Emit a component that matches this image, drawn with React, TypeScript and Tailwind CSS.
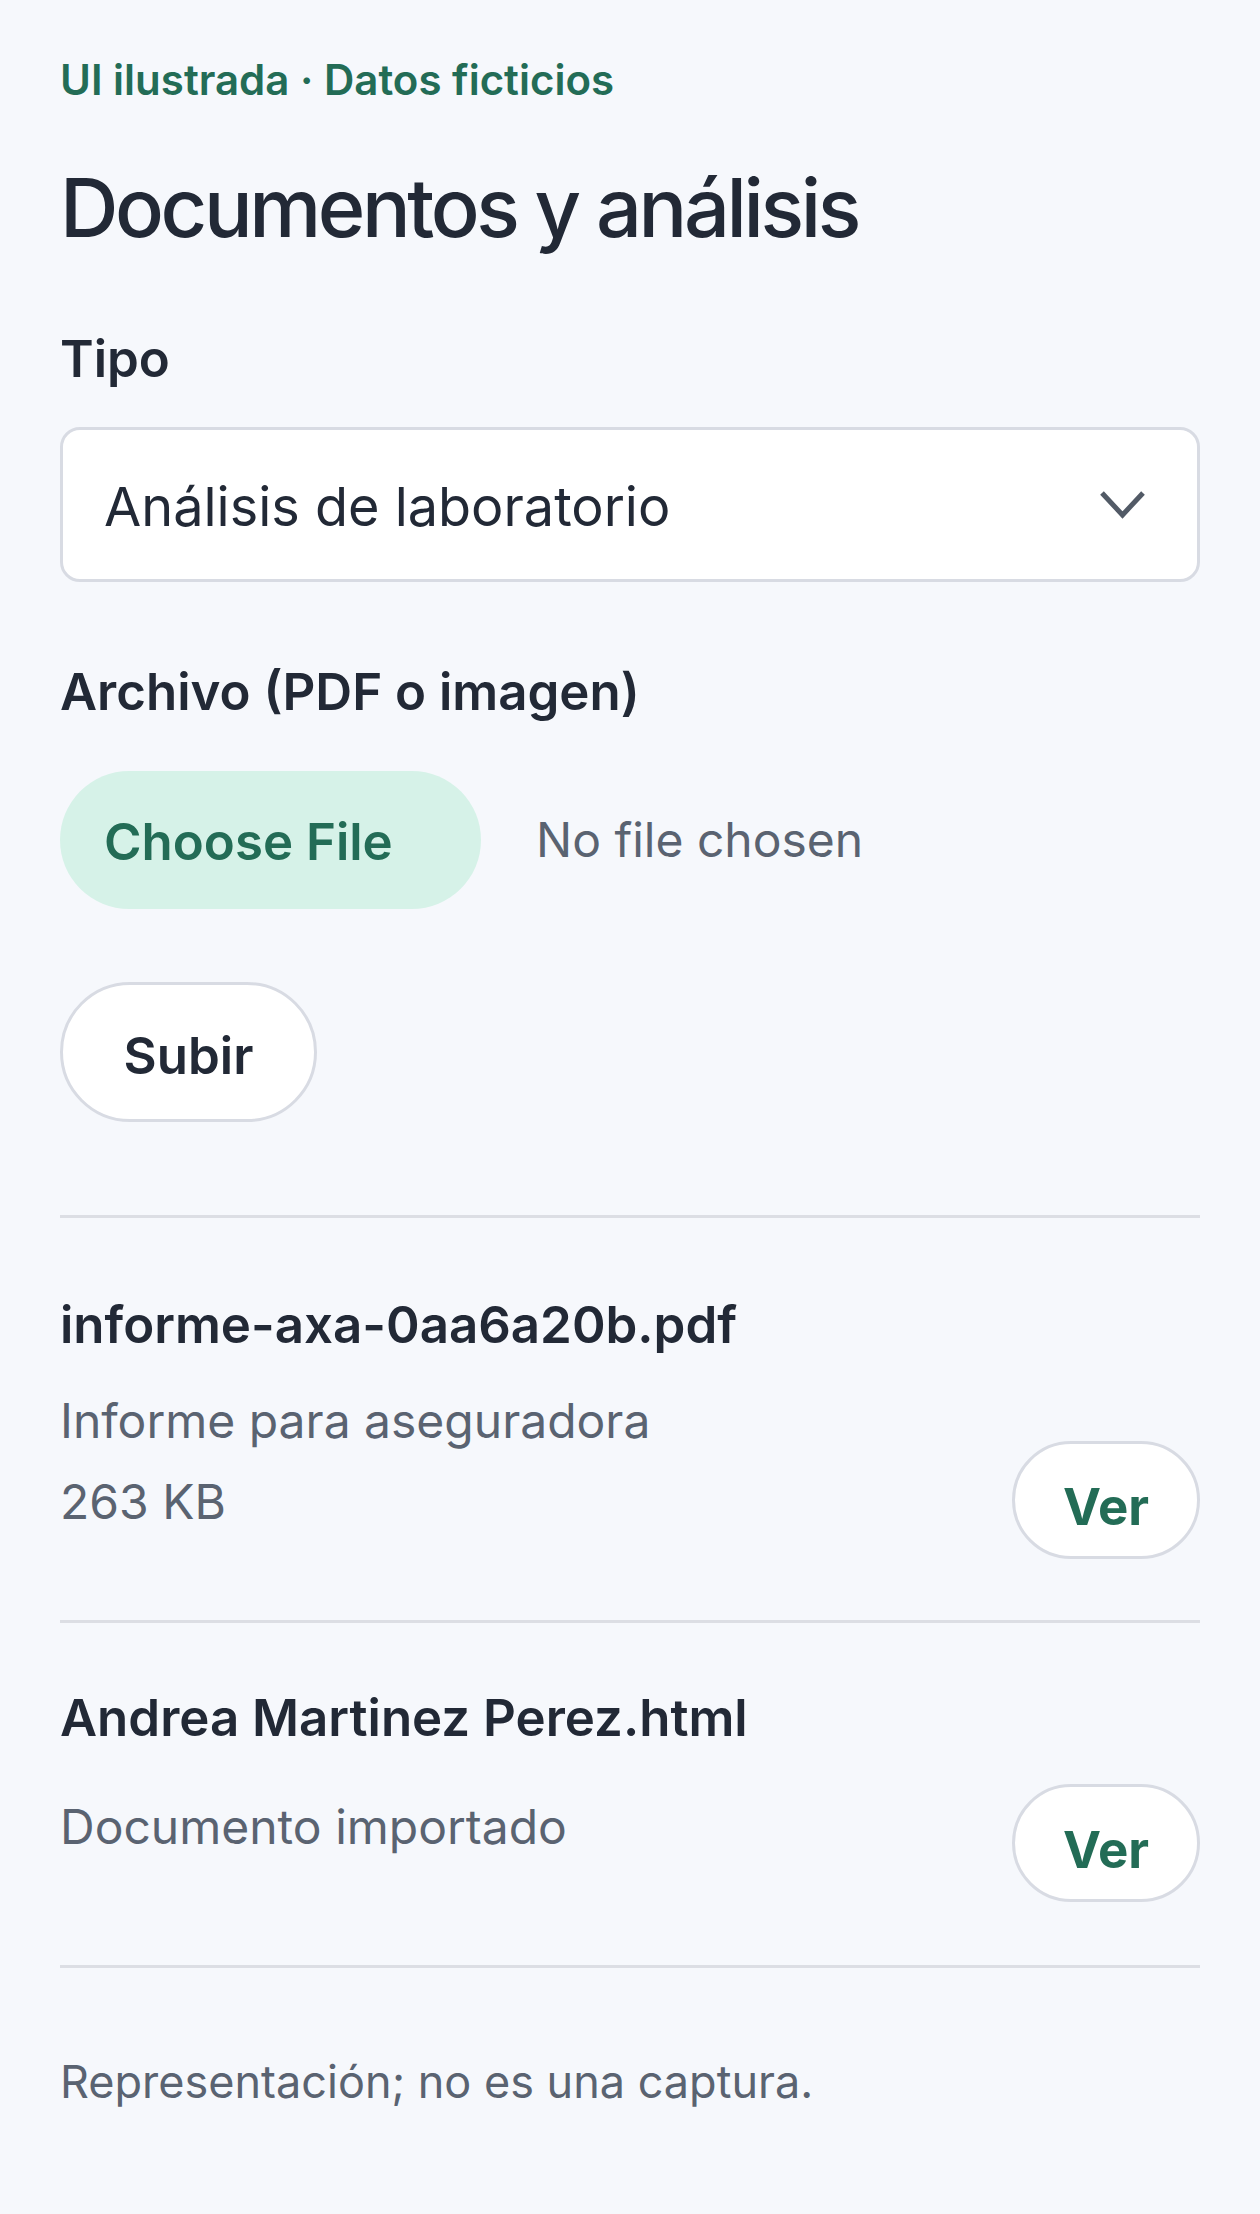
// Documentos y análisis — mobile screen drawn at 3x (420px CSS → 1260px).
const docs = [
  {
    name: "informe-axa-0aa6a20b.pdf",
    lines: ["Informe para aseguradora", "263 KB"],
    row: "pt-[71px] pb-[61px]",
    meta: "pb-[21px]",
    gap: "mt-[24px]",
  },
  {
    name: "Andrea Martinez Perez.html",
    lines: ["Documento importado"],
    row: "pt-[59px] pb-[63px]",
    meta: "pb-[39px]",
    gap: "mt-[37px]",
  },
];

export default function App() {
  return (
    <div className="min-h-screen bg-[#f6f8fc] font-['Inter',sans-serif] text-[#222936]">
      <div className="px-[60px] pt-[48px] pb-[96px]">
        <p className="text-[42px] font-semibold leading-[63px] text-[#236c56]">UI ilustrada · Datos ficticios</p>
        <h1 className="mt-[49px] text-[81px] font-medium leading-[97px] tracking-[-0.042em]">Documentos y análisis</h1>

        <label className="mt-[64px] block text-[51px] font-semibold leading-[76px]">Tipo</label>
        <div className="mt-[30px] flex h-[155px] items-center justify-between rounded-[20px] border-[3px] border-[#d8dbe3] bg-white pl-[41px] pr-[52px]">
          <span className="pt-[5px] text-[54px] leading-[76px]">Análisis de laboratorio</span>
          <svg width="45" height="28" viewBox="0 0 45 28" fill="none" className="text-[#525a66]">
            <polyline points="2,2 22.5,24 43,2" stroke="currentColor" strokeWidth="5" />
          </svg>
        </div>

        <label className="mt-[72px] block text-[51px] font-semibold leading-[76px]">Archivo (PDF o imagen)</label>
        <div className="mt-[41px] flex items-center">
          <button
            type="button"
            className="h-[138px] w-[421px] rounded-full bg-[#d6f2e8] pl-[44px] pt-[4px] text-left text-[51px] font-semibold text-[#236c56]"
          >
            Choose File
          </button>
          <span className="ml-[55px] text-[48px] text-[#5a6371]">No file chosen</span>
        </div>

        <button
          type="button"
          className="mt-[73px] block h-[140px] w-[257px] rounded-full border-[3px] border-[#d8dbe3] bg-white pt-[8px] text-[51px] font-semibold"
        >
          Subir
        </button>

        <div className="mt-[93px] border-t-[3px] border-[#dcdee4]">
          {docs.map((d) => (
            <div key={d.name} className={`flex items-end justify-between border-b-[3px] border-[#dcdee4] ${d.row}`}>
              <div className={d.meta}>
                <div className="text-[51px] font-semibold leading-[72px]">{d.name}</div>
                <div className={`${d.gap} text-[48px] leading-[72px] text-[#5a6371]`}>
                  {d.lines.map((l, i) => (
                    <div key={l} className={i > 0 ? "mt-[9px]" : ""}>
                      {l}
                    </div>
                  ))}
                </div>
              </div>
              <button
                type="button"
                className="h-[118px] w-[188px] rounded-full border-[3px] border-[#d8dbe3] bg-white pt-[14px] text-[51px] font-bold text-[#236c56]"
              >
                Ver
              </button>
            </div>
          ))}
        </div>

        <p className="mt-[78px] text-[45px] leading-[72px] text-[#5a6371]">Representación; no es una captura.</p>
      </div>
    </div>
  );
}
